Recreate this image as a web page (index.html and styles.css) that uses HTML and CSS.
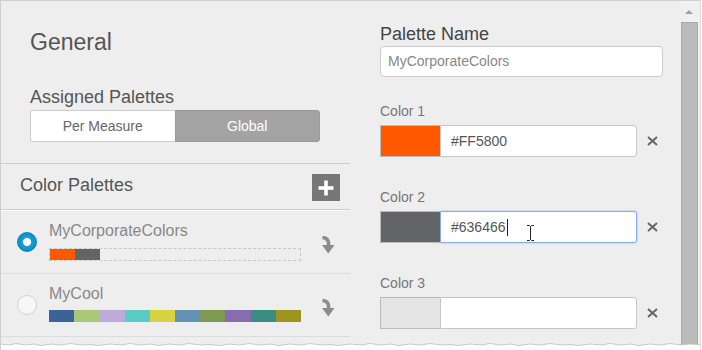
FILE: index.html
```html
<!DOCTYPE html>
<html lang="en">
<head>
  <meta charset="UTF-8">
  <meta name="viewport" content="width=device-width, initial-scale=1.0">
  <title>Color Palettes</title>
  <link rel="stylesheet" href="styles.css">
</head>
<body>
  <div class="dialog">
    <div class="sidebar">
      <div class="general">
        <h2>General</h2>
        <h3>Assigned Palettes</h3>
        <div class="segmented">
          <button class="seg">Per Measure</button>
          <button class="seg active">Global</button>
        </div>
      </div>

      <div class="palettes-head">
        <span class="palettes-title">Color Palettes</span>
        <button class="add-btn" title="Add palette">
          <svg width="16" height="16" viewBox="0 0 16 16">
            <rect x="6.2" y="0.5" width="3.6" height="15" fill="#fff"/>
            <rect x="0.5" y="6.2" width="15" height="3.6" fill="#fff"/>
          </svg>
        </button>
      </div>

      <ul class="palette-list">
        <li class="palette selected">
          <span class="radio"></span>
          <div class="palette-info">
            <div class="palette-name">MyCorporateColors</div>
            <div class="swatch-bar dashed">
              <span class="swatch" style="background:#ff5800"></span>
              <span class="swatch" style="background:#636466"></span>
            </div>
          </div>
          <svg class="apply-icon" width="16" height="19" viewBox="0 0 16 19">
            <path d="M2.5 1.5 Q9.5 2 8.5 10" stroke="#8c8c8c" stroke-width="3.6" fill="none"/>
            <polygon points="2,9 14.5,9 8.3,17.5" fill="#8c8c8c"/>
          </svg>
        </li>
        <li class="palette">
          <span class="radio"></span>
          <div class="palette-info">
            <div class="palette-name">MyCool</div>
            <div class="swatch-bar full">
              <span class="swatch" style="background:#3a6399"></span>
              <span class="swatch" style="background:#a8c878"></span>
              <span class="swatch" style="background:#bda9da"></span>
              <span class="swatch" style="background:#5accc6"></span>
              <span class="swatch" style="background:#d9d240"></span>
              <span class="swatch" style="background:#6293b6"></span>
              <span class="swatch" style="background:#7d9a50"></span>
              <span class="swatch" style="background:#876daf"></span>
              <span class="swatch" style="background:#3a8c84"></span>
              <span class="swatch" style="background:#9c961e"></span>
            </div>
          </div>
          <svg class="apply-icon" width="16" height="19" viewBox="0 0 16 19">
            <path d="M2.5 1.5 Q9.5 2 8.5 10" stroke="#8c8c8c" stroke-width="3.6" fill="none"/>
            <polygon points="2,9 14.5,9 8.3,17.5" fill="#8c8c8c"/>
          </svg>
        </li>
      </ul>
    </div>

    <div class="editor">
      <label class="name-label">Palette Name</label>
      <div class="text-input">MyCorporateColors</div>

      <div class="color-field">
        <div class="field-label">Color 1</div>
        <div class="color-row">
          <span class="color-swatch" style="background:#ff5800"></span>
          <div class="hex-input">#FF5800</div>
          <svg class="remove-icon" width="11" height="10" viewBox="0 0 11 10">
            <path d="M1 1 L10 9 M10 1 L1 9" stroke="#666" stroke-width="2"/>
          </svg>
        </div>
      </div>

      <div class="color-field">
        <div class="field-label">Color 2</div>
        <div class="color-row">
          <span class="color-swatch" style="background:#636466"></span>
          <div class="hex-input focused">#636466<span class="caret"></span>
            <svg class="ibeam" width="7" height="16" viewBox="0 0 7 16">
              <path d="M0 0.5 H2.5 L3.5 1.5 L4.5 0.5 H7 M3.5 1.5 V14.5 M0 15.5 H2.5 L3.5 14.5 L4.5 15.5 H7" stroke="#222" stroke-width="1" fill="none"/>
            </svg>
          </div>
          <svg class="remove-icon" width="11" height="10" viewBox="0 0 11 10">
            <path d="M1 1 L10 9 M10 1 L1 9" stroke="#666" stroke-width="2"/>
          </svg>
        </div>
      </div>

      <div class="color-field">
        <div class="field-label">Color 3</div>
        <div class="color-row">
          <span class="color-swatch" style="background:#e4e4e4"></span>
          <div class="hex-input"></div>
          <svg class="remove-icon" width="11" height="10" viewBox="0 0 11 10">
            <path d="M1 1 L10 9 M10 1 L1 9" stroke="#666" stroke-width="2"/>
          </svg>
        </div>
      </div>
    </div>

    <div class="scrollbar">
      <span class="scroll-up"></span>
      <div class="scroll-thumb"></div>
    </div>

    <!-- torn bottom edge of the screenshot -->
    <svg class="torn-edge" width="702" height="10" viewBox="0 0 702 10">
      <path d="M0 4 L9 5 L16 3.5 L25 5 L34 4 L41 5.5 L52 4 L60 5 L71 3.5 L80 5 L91 4.5 L99 5.5 L110 4 L121 5 L130 3.5 L141 5 L150 4 L158 5.5 L169 4 L180 5 L189 3.5 L200 5 L209 4.5 L220 5.5 L229 4 L240 5 L249 3.5 L260 5 L270 4 L279 5.5 L290 4 L301 5 L310 3.5 L321 5 L330 4.5 L339 5.5 L350 4 L361 5 L370 3.5 L381 5 L390 4 L399 5.5 L410 4 L421 5 L430 3.5 L441 5 L450 4.5 L459 5.5 L470 4 L481 5 L490 3.5 L501 5 L510 4 L519 5.5 L530 4 L541 5 L550 3.5 L561 5 L570 4.5 L579 5.5 L590 4 L601 5 L610 3.5 L621 5 L630 4 L639 5.5 L650 4 L661 5 L670 3.5 L681 5 L690 4 L702 5 L702 10 L0 10 Z" fill="#fff"/>
      <path d="M0 4 L9 5 L16 3.5 L25 5 L34 4 L41 5.5 L52 4 L60 5 L71 3.5 L80 5 L91 4.5 L99 5.5 L110 4 L121 5 L130 3.5 L141 5 L150 4 L158 5.5 L169 4 L180 5 L189 3.5 L200 5 L209 4.5 L220 5.5 L229 4 L240 5 L249 3.5 L260 5 L270 4 L279 5.5 L290 4 L301 5 L310 3.5 L321 5 L330 4.5 L339 5.5 L350 4 L361 5 L370 3.5 L381 5 L390 4 L399 5.5 L410 4 L421 5 L430 3.5 L441 5 L450 4.5 L459 5.5 L470 4 L481 5 L490 3.5 L501 5 L510 4 L519 5.5 L530 4 L541 5 L550 3.5 L561 5 L570 4.5 L579 5.5 L590 4 L601 5 L610 3.5 L621 5 L630 4 L639 5.5 L650 4 L661 5 L670 3.5 L681 5 L690 4 L702 5" stroke="#c9c9c9" stroke-width="1" fill="none"/>
    </svg>
  </div>
</body>
</html>
```

FILE: styles.css
```css
body {
  margin: 0;
  padding: 0;
  background-color: #fff;
  font-family: "Liberation Sans", Arial, sans-serif;
}

.dialog {
  position: relative;
  display: flex;
  width: 701px;
  height: 350px;
  box-sizing: border-box;
  background-color: #eee;
  border-top: 1px solid #cfcfcf;
  border-left: 1px solid #cfcfcf;
  border-right: 1px solid #dcdcdc;
  overflow: hidden;
}

/* left column */
.sidebar {
  width: 349px;
  flex-shrink: 0;
}

.general {
  padding: 27px 0 21px 29px;
  border-bottom: 1px solid #cdcdcd;
}

.general h2 {
  margin: 0;
  font-size: 23px;
  line-height: 28px;
  font-weight: normal;
  color: #555;
}

.general h3 {
  margin: 30px 0 0;
  font-size: 18px;
  line-height: 22px;
  font-weight: normal;
  color: #555;
}

.segmented {
  display: flex;
  width: 290px;
  height: 32px;
  margin-top: 2px;
  box-sizing: border-box;
  border: 1px solid #ccc;
  border-radius: 3px;
  background-color: #fff;
}

.segmented .seg {
  flex: 1;
  border: none;
  padding: 0;
  background: none;
  font-family: inherit;
  font-size: 14px;
  color: #666;
}

.segmented .seg.active {
  margin: -1px -1px -1px 0;
  background-color: #a3a3a3;
  border: 1px solid #999;
  border-radius: 0 3px 3px 0;
  color: #fff;
}

.palettes-head {
  display: flex;
  justify-content: space-between;
  align-items: flex-start;
  padding: 10px 10px 8px 19px;
  border-bottom: 1px solid #cdcdcd;
}

.palettes-title {
  font-size: 18px;
  line-height: 22px;
  color: #555;
}

.add-btn {
  display: flex;
  justify-content: center;
  align-items: center;
  width: 28px;
  height: 27px;
  padding: 0;
  border: none;
  background-color: #777;
}

.palette-list {
  list-style: none;
  margin: 0;
  padding: 0;
  border-top: 1px solid #fafafa;
}

.palette {
  display: flex;
  align-items: center;
  gap: 12px;
  height: 62px;
  padding-left: 16px;
  border-bottom: 1px solid #dcdcdc;
}

.radio {
  width: 20px;
  height: 20px;
  box-sizing: border-box;
  border-radius: 50%;
  border: 1px solid #d2d2d2;
  background-color: #f7f7f7;
}

.palette.selected .radio {
  border-color: #0b86bd;
  background: radial-gradient(circle, #fff 0 3.6px, #1ea0d8 4.4px, #0d8cc4 9px);
}

.palette-info {
  align-self: flex-start;
  width: 252px;
  padding-top: 10px;
}

.palette-name {
  font-size: 16px;
  line-height: 20px;
  color: #888;
}

.swatch-bar {
  display: flex;
  height: 13px;
  margin-top: 7px;
  box-sizing: border-box;
}

.swatch-bar.dashed {
  border: 1px dashed #c8c8c8;
}

.swatch-bar.dashed .swatch {
  width: 25px;
}

.swatch-bar.full {
  height: 12px;
  margin-top: 6px;
}

.swatch-bar.full .swatch {
  flex: 1;
}

.apply-icon {
  margin: 6px 0 0 7px;
}

/* right column */
.editor {
  width: 330px;
  flex-shrink: 0;
  padding: 22px 0 0 30px;
  box-sizing: border-box;
}

.name-label {
  display: block;
  font-size: 18px;
  line-height: 22px;
  color: #444;
}

.text-input {
  width: 283px;
  height: 31px;
  margin-top: 1px;
  padding: 0 7px;
  box-sizing: border-box;
  border: 1px solid #ccc;
  border-radius: 4px;
  background-color: #fff;
  font-size: 14px;
  line-height: 29px;
  color: #888;
}

.color-field {
  margin-top: 25px;
}

.color-field + .color-field {
  margin-top: 31px;
}

.field-label {
  font-size: 14px;
  line-height: 18px;
  color: #777;
}

.color-row {
  display: flex;
  align-items: center;
  margin-top: 5px;
}

.color-swatch {
  width: 60px;
  height: 32px;
  box-sizing: border-box;
  border: 1px solid #bbb;
  border-right: none;
}

.hex-input {
  position: relative;
  width: 197px;
  height: 32px;
  box-sizing: border-box;
  padding-left: 10px;
  border: 1px solid #c6c6c6;
  border-radius: 0 3px 3px 0;
  background-color: #fff;
  font-size: 14px;
  line-height: 30px;
  color: #555;
}

.hex-input.focused {
  border-color: #86acea;
  box-shadow: 0 0 2px rgba(90, 140, 230, 0.5);
}

.caret {
  display: inline-block;
  width: 1px;
  height: 17px;
  margin-left: 1px;
  vertical-align: -4px;
  background-color: #222;
}

.ibeam {
  position: absolute;
  left: 86px;
  top: 13px;
}

.remove-icon {
  margin-left: 10px;
}

/* scrollbar */
.scrollbar {
  position: relative;
  width: 20px;
  flex-shrink: 0;
  background-color: #f0f0f0;
}

.scroll-up {
  position: absolute;
  left: 5px;
  top: 9px;
  border-left: 4px solid transparent;
  border-right: 4px solid transparent;
  border-bottom: 4px solid #a0a0a0;
}

.scroll-thumb {
  position: absolute;
  left: 1px;
  top: 21px;
  width: 17px;
  bottom: 0;
  box-sizing: border-box;
  background-color: #bbb;
  border: 1px solid #aaa;
  border-bottom: none;
}

.torn-edge {
  position: absolute;
  left: -1px;
  bottom: 0;
}
```
